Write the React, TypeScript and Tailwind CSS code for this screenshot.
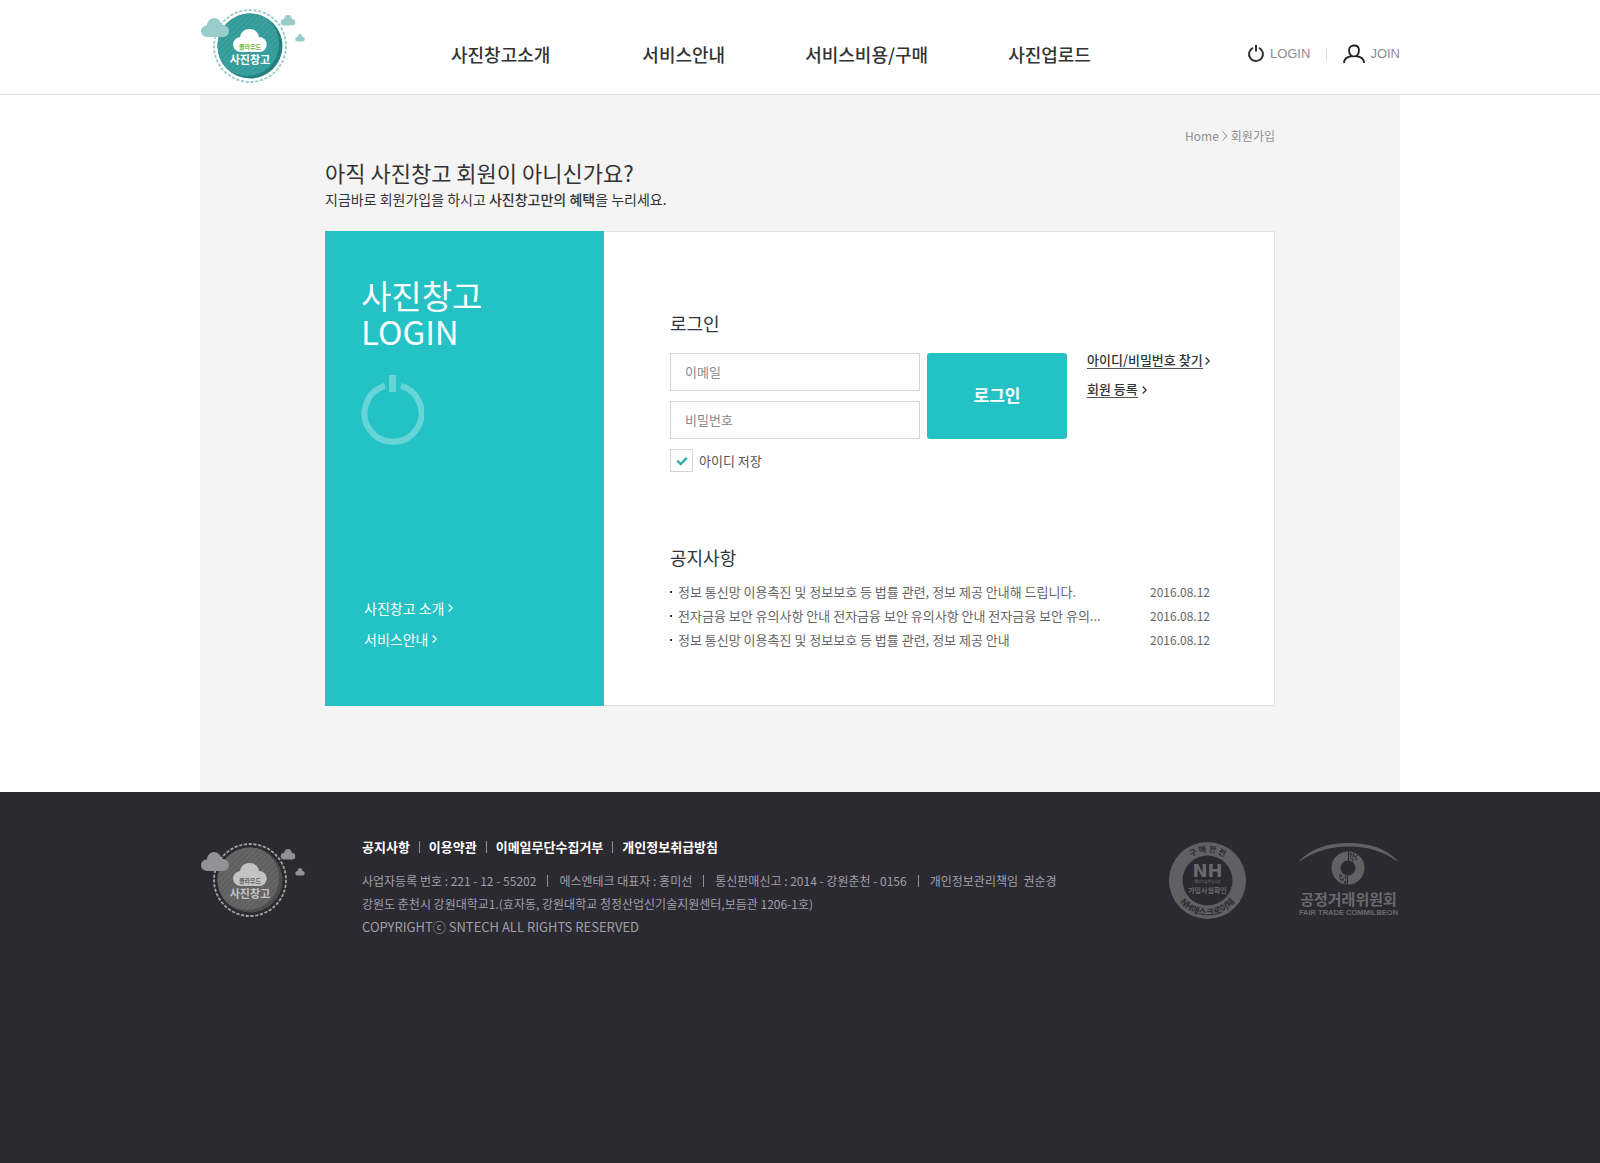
import React, { useState } from "react";

type LogoTheme = {
  ring: string;
  disc: string;
  shade: string;
  stripe: string;
  cloud: string;
  inner: string;
  label: string;
  title: string;
};

const tealTheme: LogoTheme = {
  ring: "#97cccb",
  disc: "#339c9a",
  shade: "#24807f",
  stripe: "#46a6a4",
  cloud: "#98cdcc",
  inner: "#ffffff",
  label: "#6fb536",
  title: "#ffffff",
};

const grayTheme: LogoTheme = {
  ring: "#a3a3a3",
  disc: "#606060",
  shade: "#4c4c4c",
  stripe: "#6e6e6e",
  cloud: "#929294",
  inner: "#c3c3c4",
  label: "#606060",
  title: "#c3c3c4",
};

function Logo({ theme, id }: { theme: LogoTheme; id: string }) {
  return (
    <svg width="106" height="76" viewBox="0 0 106 76" role="img" aria-label="클라우드 사진창고">
      <defs>
        <pattern id={id} width="4" height="4" patternUnits="userSpaceOnUse" patternTransform="rotate(45)">
          <rect width="0.8" height="4" fill={theme.stripe} />
        </pattern>
        <clipPath id={id + "-disc"}>
          <circle cx="50" cy="38" r="32.5" />
        </clipPath>
      </defs>
      <circle cx="50" cy="38" r="36" fill="none" stroke={theme.ring} strokeWidth="1.8" strokeDasharray="3.2 1.6" />
      <circle cx="50" cy="38" r="32.5" fill={theme.shade} />
      <g clipPath={"url(#" + id + "-disc)"}>
        <circle cx="47" cy="36" r="32" fill={theme.disc} />
        <circle cx="47" cy="36" r="32" fill={"url(#" + id + ")"} />
      </g>
      <path
        d="M7 29a5.800 5.800 0 0 1-6-5.800c0-3.200 2.600-5.700 5.800-5.700C7.500 13 10.300 10 14 10s6.800 2.800 7.500 7c4.200-0.300 7.500 2.300 7.500 6 0 3.500-2.700 6-6 6z"
        fill={theme.cloud}
      />
      <path d="M84 17.500a3.200 3.200 0 0 1 0-6.500C84.500 8.500 86 7 88 7s3.500 1.500 4 4a3.200 3.200 0 0 1 0 6.500z" fill={theme.cloud} />
      <path d="M97.500 33.500a2.300 2.300 0 0 1 0-4.600C98 27 98.800 26 100 26s2.200 1 2.500 2.900a2.300 2.300 0 0 1 0 4.600z" fill={theme.cloud} />
      <path
        d="M41 44a7.500 7.500 0 0 1-0.800-15C40.500 24.500 44.500 21 49.500 21s9 3.300 9.500 8a7.500 7.500 0 0 1 0.500 15z"
        fill={theme.inner}
      />
      <text x="50" y="40.500" textAnchor="middle" fontSize="6" fontWeight="700" fill={theme.label}>
        클라우드
      </text>
      <text x="50" y="56" textAnchor="middle" fontSize="11" fontWeight="700" fill={theme.title}>
        사진창고
      </text>
    </svg>
  );
}

function PowerIcon() {
  return (
    <svg width="18" height="20" viewBox="0 0 18 20" aria-hidden="true" fill="none" stroke="#333333">
      <path d="M6 3.800a7 7 0 1 0 6 0" strokeWidth="2" />
      <path d="M9 1v6.500" strokeWidth="2" />
    </svg>
  );
}

function PersonIcon() {
  return (
    <svg width="22" height="20" viewBox="0 0 22 20" aria-hidden="true" fill="none" stroke="#222222" strokeWidth="1.8">
      <path d="M8.300 11.700C6.800 10.300 6 8.500 6 6.400 6 3.500 8 1.500 11 1.500s5 2 5 4.900c0 2.100-0.800 3.900-2.300 5.300" />
      <path d="M1 19c0-4.500 2.500-6.300 8-7 0.500 0.600 3.500 0.600 4 0 5.500 0.700 8 2.500 8 7" />
    </svg>
  );
}

function BigPowerIcon() {
  return (
    <svg width="63" height="71" viewBox="0 0 63 71" aria-hidden="true" fill="none" stroke="#67d5d7">
      <path d="M24 10.900a28.500 28.500 0 1 0 16 0" strokeWidth="6" />
      <path d="M31.500 0v17" strokeWidth="7" />
    </svg>
  );
}

function Chevron() {
  return (
    <svg width="5" height="8" viewBox="0 0 5 8" aria-hidden="true" fill="none" stroke="currentColor" strokeWidth="1.3">
      <path d="M0.700 0.500L4.200 4 0.700 7.500" />
    </svg>
  );
}

function CrumbArrow() {
  return (
    <svg width="6" height="10" viewBox="0 0 6 10" aria-hidden="true" fill="none" stroke="currentColor">
      <path d="M0.500 0.500L5 5 0.500 9.500" />
    </svg>
  );
}

function EscrowMark() {
  return (
    <svg width="77" height="77" viewBox="0 0 77 77" role="img" aria-label="구매안전 NH에스크로이체">
      <defs>
        <path id="escrow-top" d="M10 38.500a28.500 28.500 0 0 1 57 0" />
        <path id="escrow-bottom" d="M3.500 38.500a35 35 0 0 0 70 0" />
      </defs>
      <circle cx="38.500" cy="38.500" r="38.500" fill="#606062" />
      <circle cx="38.500" cy="38.500" r="25" fill="#2b2a30" />
      <g fontWeight="700" fill="#2b2a30" textAnchor="middle">
        <text fontSize="8">
          <textPath href="#escrow-top" startOffset="50%">구 매 안 전</textPath>
        </text>
        <text fontSize="9">
          <textPath href="#escrow-bottom" startOffset="50%">NH에스크로이체</textPath>
        </text>
      </g>
      <g fill="#6a6a6c" textAnchor="middle">
        <text x="38.500" y="35" fontSize="18" fontWeight="700" fontFamily="'DejaVu Sans'">NH</text>
        <text x="38.500" y="41" fontSize="5" fontFamily="'DejaVu Sans'">NongHyup</text>
        <text x="38.500" y="51" fontSize="7" fontWeight="700">가입사실확인</text>
      </g>
    </svg>
  );
}

function FairTradeMark() {
  return (
    <svg width="102" height="74" viewBox="0 0 102 74" role="img" aria-label="공정거래위원회">
      <path d="M1 19C14 6 30 1 50.500 1S87 6 99.500 18.500l-0.500 0.500C85 9.500 70 4.500 51 4.500S16 9.500 1.500 19.500z" fill="#616163" />
      <circle cx="50" cy="26" r="12" fill="none" stroke="#616163" strokeWidth="9" />
      <path d="M50.500 9v10M49.500 33v10" stroke="#2b2a30" strokeWidth="1" />
      <path
        d="M52 11l2 2M56 11l-1 4M59.500 13l-3 2.500M52 16l3 1M57 18l2-1.500M53 13.500l-1 1.500M54 19l1.500-1M41 35l3-1M44 39l2-3M47 34l1 3M46 41l2-2M41 32.500l3 1M42 38l1.500-1.500M47.500 42v-2"
        stroke="#2b2a30"
        strokeWidth="1.200"
      />
      <text x="50.500" y="63" textAnchor="middle" fontSize="15" fontWeight="700" fill="#6a6a6c">
        공정거래위원회
      </text>
      <text x="50.500" y="73" textAnchor="middle" fontSize="7.500" fontWeight="700" fill="#6a6a6c" fontFamily="'Liberation Sans'">
        FAIR TRADE COMMILBEON
      </text>
    </svg>
  );
}

const notices = [
  { text: "정보 통신망 이용촉진 및 정보보호 등 법률 관련, 정보 제공 안내해 드립니다.", date: "2016.08.12" },
  { text: "전자금융 보안 유의사항 안내 전자금융 보안 유의사항 안내 전자금융 보안 유의...", date: "2016.08.12" },
  { text: "정보 통신망 이용촉진 및 정보보호 등 법률 관련, 정보 제공 안내", date: "2016.08.12" },
];

function Header() {
  return (
    <header className="border-b border-[#e1e1e1] bg-white">
      <div className="mx-auto flex h-[94px] max-w-[1200px]">
        <a href="#home" className="pt-2">
          <Logo theme={tealTheme} id="stripes-teal" />
        </a>
        <nav className="ml-[145px] flex items-start gap-20 pt-10 text-lg leading-7 font-medium text-[#333333]">
          <a href="#about" className="mr-3">사진창고소개</a>
          <a href="#service">서비스안내</a>
          <a href="#price">서비스비용/구매</a>
          <a href="#upload">사진업로드</a>
        </nav>
        <div className="ml-auto flex items-start pt-11 font-['Liberation_Sans'] text-[13px] leading-5 text-[#8c8c8c]">
          <a href="#login" className="flex gap-[5px]">
            <PowerIcon />
            LOGIN
          </a>
          <span className="mx-4 mt-1 h-3 w-px bg-[#dddddd]" />
          <a href="#join" className="flex gap-[5px]">
            <PersonIcon />
            JOIN
          </a>
        </div>
      </div>
    </header>
  );
}

function SidePanel() {
  return (
    <div className="flex w-[279px] shrink-0 flex-col bg-[#24c1c5] px-9 pt-[46px] pb-[55px] text-white">
      <h2 className="text-[33px] leading-9">
        사진창고
        <br />
        LOGIN
      </h2>
      <div className="mt-[26px]">
        <BigPowerIcon />
      </div>
      <div className="mt-auto flex flex-col gap-[7px] pl-[3px] text-sm leading-6">
        <a href="#about" className="flex items-center gap-1">
          사진창고 소개 <Chevron />
        </a>
        <a href="#service" className="flex items-center gap-1">
          서비스안내 <Chevron />
        </a>
      </div>
    </div>
  );
}

function LoginForm() {
  const [saved, setSaved] = useState(true);
  const field =
    "h-[38px] w-[250px] border border-[#d5d5d5] bg-white px-3.5 pb-0.5 text-[13px] text-[#555555] outline-none placeholder:text-[#8a8a8a]";
  return (
    <form onSubmit={(e) => e.preventDefault()}>
      <h3 className="text-lg leading-7 text-[#2d3640]">로그인</h3>
      <div className="mt-4 flex items-start">
        <div className="flex flex-col gap-2.5">
          <input type="email" aria-label="이메일" placeholder="이메일" className={field} />
          <input type="password" aria-label="비밀번호" placeholder="비밀번호" className={field} />
        </div>
        <button type="submit" className="ml-[7px] h-[86px] w-[140px] rounded-[3px] bg-[#24c1c5] pb-0.5 text-[17px] font-bold text-white">
          로그인
        </button>
        <div className="ml-5 flex flex-col gap-[13px] text-[13px] leading-[13px] font-medium text-[#333333]">
          <a href="#find" className="flex items-center gap-0.5">
            <span className="block border-b border-[#555555] pb-0.5">아이디/비밀번호 찾기</span>
            <Chevron />
          </a>
          <a href="#join" className="flex items-center gap-1">
            <span className="block border-b border-[#555555] pb-0.5">회원 등록</span>
            <Chevron />
          </a>
        </div>
      </div>
      <label className="mt-2.5 flex items-center gap-1.5 text-[13px] leading-5 text-[#555555]">
        <span className="grid h-[23px] w-[23px] place-items-center border border-[#d5d5d5]">
          <input
            type="checkbox"
            checked={saved}
            onChange={(e) => setSaved(e.target.checked)}
            className="peer col-start-1 row-start-1 h-[21px] w-[21px] appearance-none"
          />
          <svg
            width="12"
            height="10"
            viewBox="0 0 12 10"
            aria-hidden="true"
            className="pointer-events-none invisible col-start-1 row-start-1 peer-checked:visible"
          >
            <path d="M1.200 4.500L4.700 8 10.800 1.800" fill="none" stroke="#2fa9ab" strokeWidth="2.400" />
          </svg>
        </span>
        아이디 저장
      </label>
    </form>
  );
}

function Notices() {
  return (
    <section className="mt-[71px]">
      <h3 className="text-lg leading-7 text-[#2d3640]">공지사항</h3>
      <ul className="mt-[9px] text-[13px] leading-6 text-[#666666]">
        {notices.map((n, i) => (
          <li key={i} className="flex items-center">
            <span className="mr-1.5 h-0.5 w-0.5 bg-[#333333]" />
            <a href="#notice" className="grow">{n.text}</a>
            <time className="text-xs leading-6">{n.date}</time>
          </li>
        ))}
      </ul>
    </section>
  );
}

function Bar() {
  return <span className="h-3 w-px bg-[#8f8e99]" />;
}

function Footer() {
  return (
    <footer className="grow bg-[#2b2a30]">
      <div className="mx-auto flex max-w-[1200px] items-start pt-[50px]">
        <Logo theme={grayTheme} id="stripes-gray" />
        <div className="ml-14">
          <nav className="-mt-[5px] flex items-center gap-[9px] text-[13px] leading-5 font-bold text-white">
            <a href="#notice">공지사항</a>
            <Bar />
            <a href="#terms">이용약관</a>
            <Bar />
            <a href="#email">이메일무단수집거부</a>
            <Bar />
            <a href="#privacy">개인정보취급방침</a>
          </nav>
          <div className="mt-3 text-xs leading-[23px] text-[#a09fad]">
            <p className="flex items-center gap-[11px]">
              사업자등록 번호 : 221 - 12 - 55202
              <Bar />
              에스엔테크 대표자 : 홍미선
              <Bar />
              통신판매신고 : 2014 - 강원춘천 - 0156
              <Bar />
              <span className="whitespace-pre">개인정보관리책임  권순경</span>
            </p>
            <p>강원도 춘천시 강원대학교1.(효자동, 강원대학교 청정산업신기술지원센터,보듬관 1206-1호)</p>
            <p className="text-[13px] leading-[23px]">COPYRIGHTⓒ SNTECH ALL RIGHTS RESERVED</p>
          </div>
        </div>
        <div className="ml-auto flex items-start gap-[52px]">
          <EscrowMark />
          <FairTradeMark />
        </div>
      </div>
    </footer>
  );
}

export default function App() {
  return (
    <div className="flex min-h-screen flex-col bg-white font-['Noto_Sans_CJK_KR',sans-serif]">
      <Header />
      <main className="mx-auto w-full max-w-[1200px] bg-[#f4f4f4] pb-[86px]">
        <div className="mx-auto max-w-[950px]">
          <p className="flex items-center justify-end gap-[3px] pt-8 text-xs leading-[18px] text-[#8f8f8f]">
            <a href="#home">Home</a>
            <CrumbArrow />
            <a href="#join">회원가입</a>
          </p>
          <h1 className="mt-[11px] text-[22px] leading-8 text-[#333333]">아직 사진창고 회원이 아니신가요?</h1>
          <p className="text-sm leading-[22px] text-[#333333]">
            지금바로 회원가입을 하시고 <span className="font-medium">사진창고만의 혜택</span>을 누리세요.
          </p>
          <div className="mt-[21px] flex h-[475px]">
            <SidePanel />
            <div className="grow border border-l-0 border-[#e3e3e3] bg-white pt-[77px] pr-16 pl-[66px]">
              <LoginForm />
              <Notices />
            </div>
          </div>
        </div>
      </main>
      <Footer />
    </div>
  );
}
